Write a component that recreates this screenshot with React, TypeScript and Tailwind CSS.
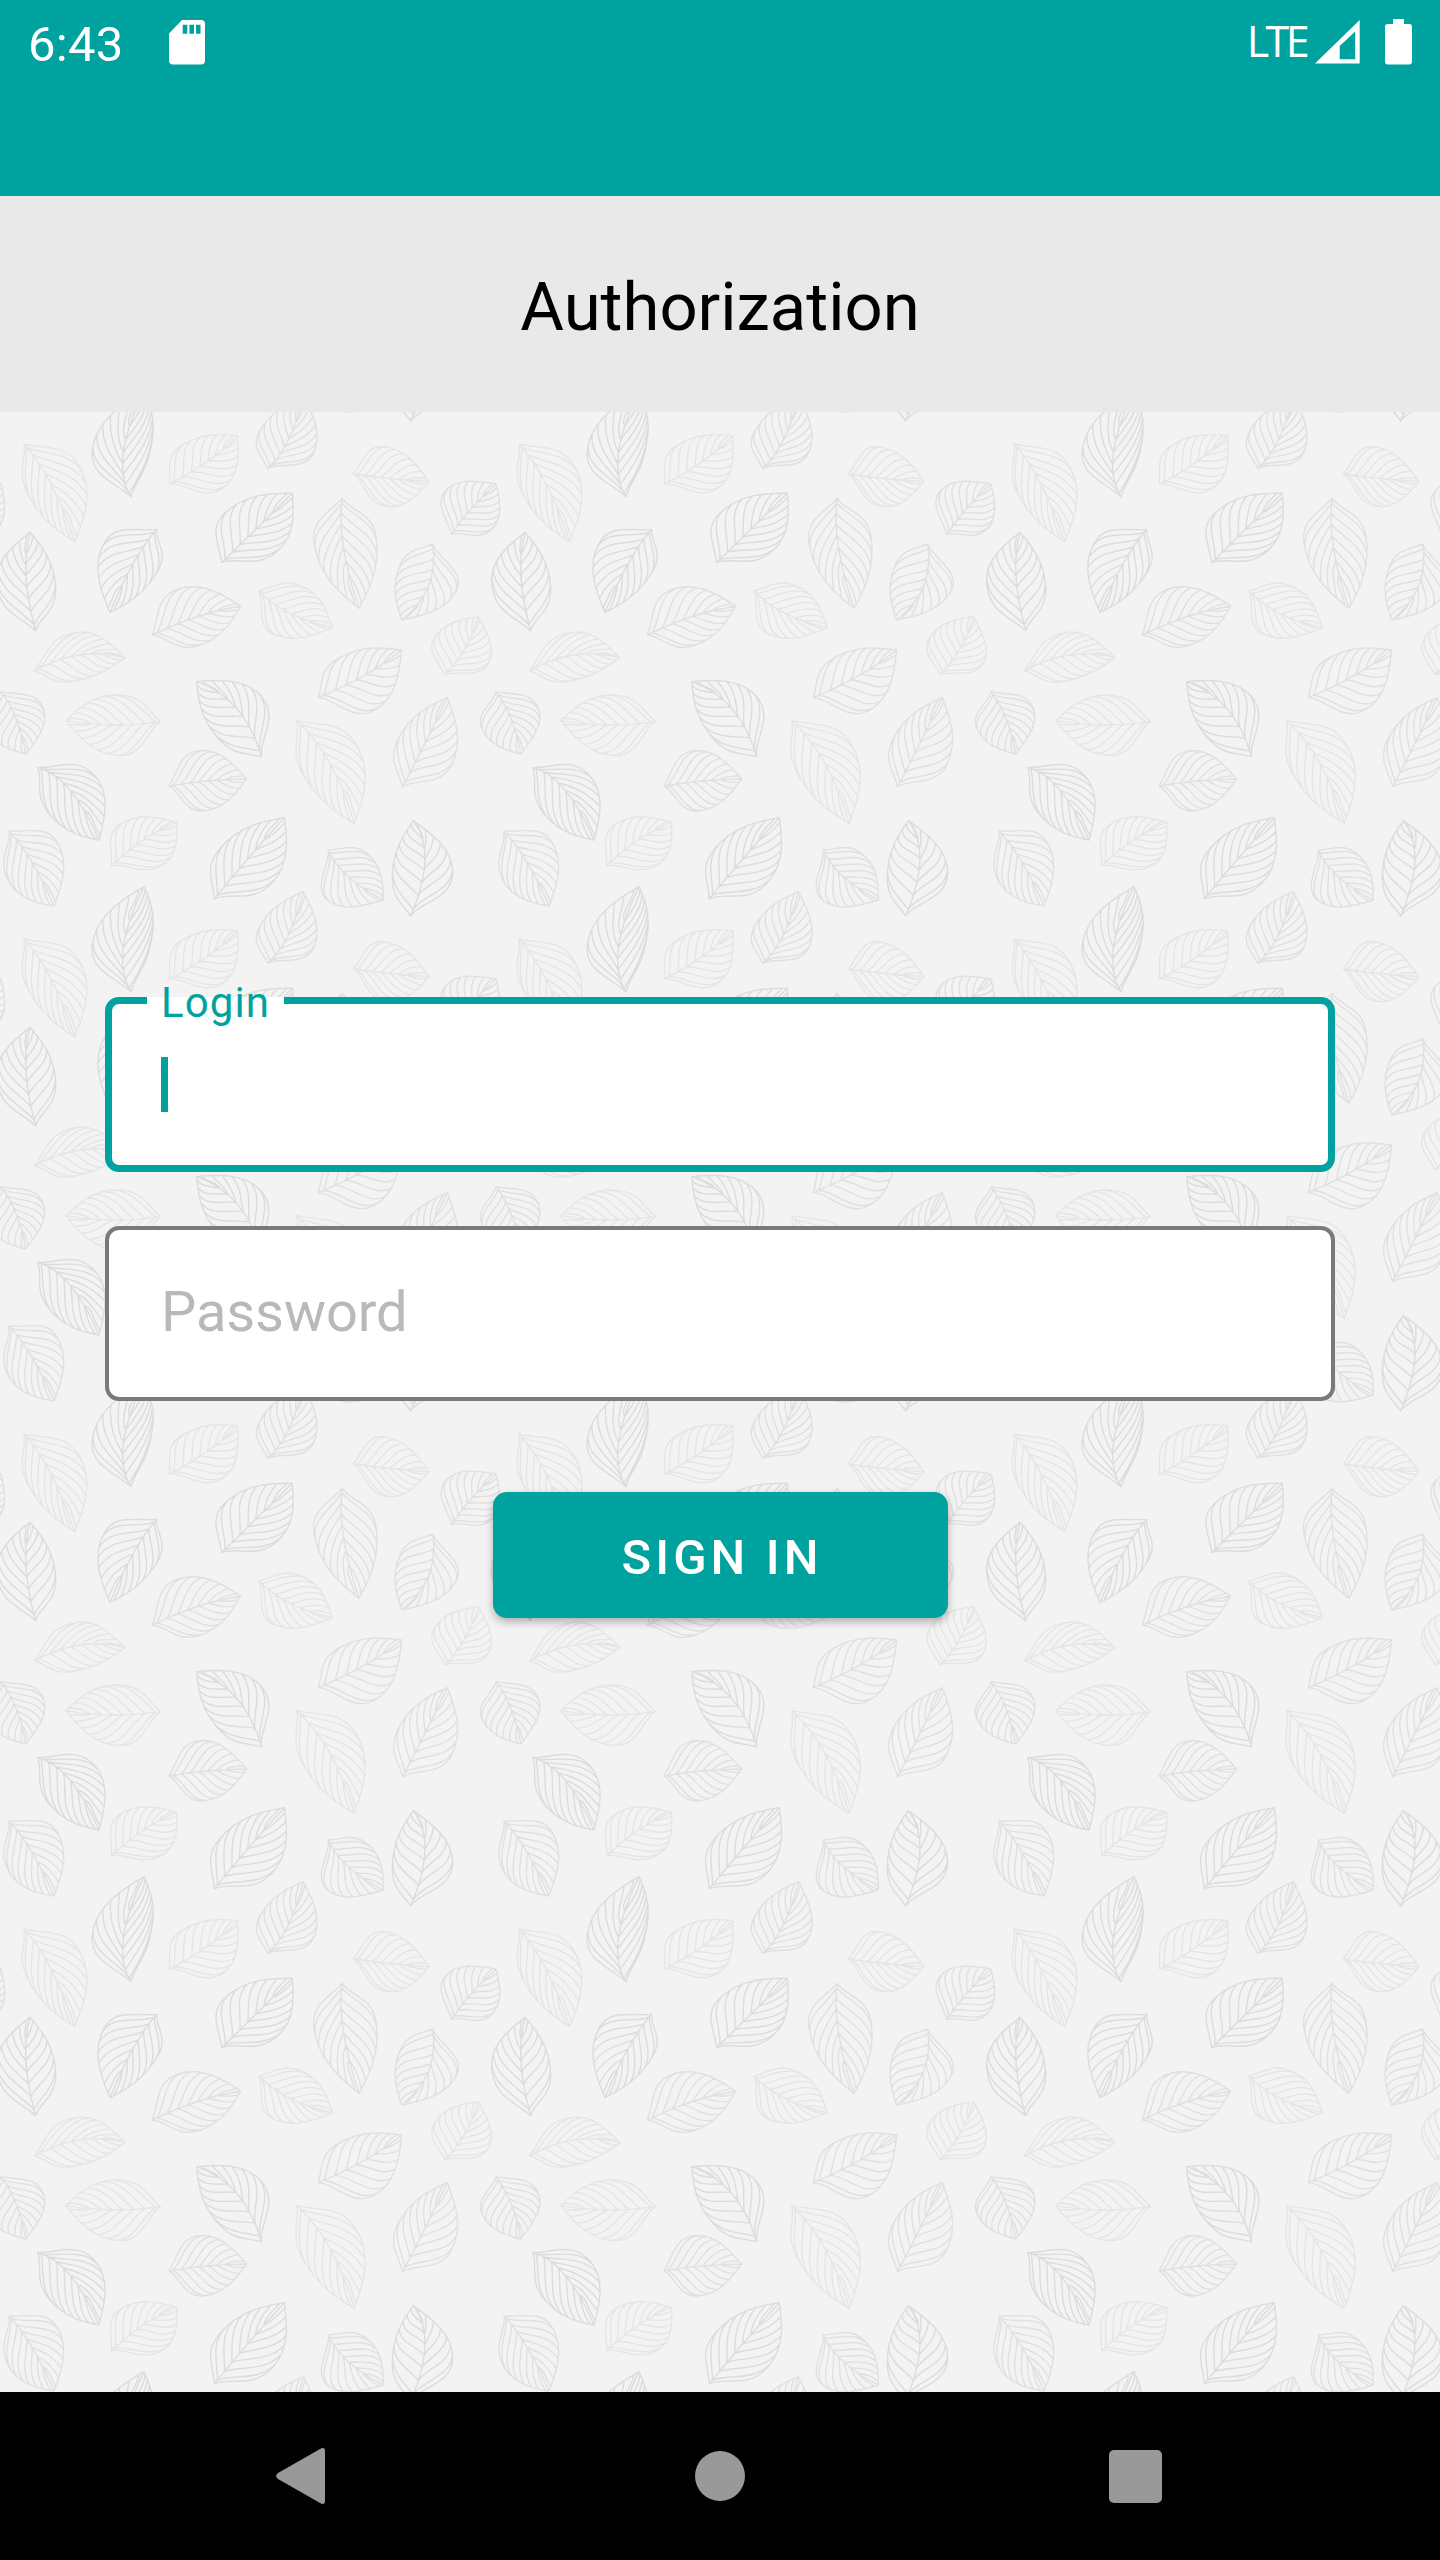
type Pt = [number, number];
type Shade = "dark" | "mid" | "light";
type Leaf = { stem: Pt; tip: Pt; sideA: Pt; sideB: Pt; rib: Pt; shade: Shade };

const TILE = 1485;

const leaf = (stem: Pt, tip: Pt, sideA: Pt, sideB: Pt, rib: Pt, shade: Shade): Leaf => ({
  stem, tip, sideA, sideB, rib, shade,
});

const leaves: Leaf[] = [
  leaf([72, 132], [224, 425], [242, 205], [85, 285], [152, 250], "light"),
  leaf([393, 290], [432, -25], [277, 150], [458, 110], [370, 160], "dark"),
  leaf([508, 252], [713, 107], [540, 140], [672, 262], [620, 185], "light"),
  leaf([803, 205], [910, -10], [776, 100], [940, 160], [865, 120], "mid"),
  leaf([1060, 222], [1287, 245], [1150, 140], [1165, 320], [1165, 235], "light"),
  leaf([1355, 403], [1488, 252], [1337, 272], [1478, 385], [1415, 325], "mid"),
  leaf([665, 488], [877, 280], [672, 342], [838, 448], [765, 390], "dark"),
  leaf([1027, 295], [1077, 625], [942, 430], [1128, 410], [1030, 440], "mid"),
  leaf([1298, 432], [1205, 660], [1198, 500], [1372, 565], [1285, 560], "mid"),
  leaf([470, 388], [330, 638], [312, 430], [475, 510], [400, 490], "dark"),
  leaf([107, 692], [90, 397], [-10, 545], [167, 560], [78, 530], "dark"),
  leaf([457, 705], [722, 618], [535, 567], [600, 736], [590, 650], "mid"),
  leaf([777, 573], [997, 683], [915, 563], [815, 700], [870, 640], "light"),
  leaf([103, 813], [375, 773], [230, 697], [215, 845], [240, 765], "light"),
  leaf([1335, 825], [1435, 650], [1303, 715], [1465, 790], [1395, 745], "light"),
  leaf([955, 893], [1205, 750], [1015, 775], [1125, 930], [1095, 825], "mid"),
  leaf([785, 1070], [590, 845], [650, 1010], [785, 890], [710, 925], "dark"),
  leaf([3, 875], [77, 1062], [130, 925], [-40, 985], [50, 960], "mid"),
  leaf([482, 965], [197, 962], [350, 885], [360, 1067], [340, 975], "light"),
  leaf([507, 1158], [740, 1137], [600, 1052], [610, 1233], [620, 1143], "mid"),
  leaf([113, 1103], [297, 1320], [287, 1130], [150, 1245], [210, 1170], "dark"),
  leaf([890, 962], [1063, 1270], [1073, 1040], [910, 1125], [990, 1090], "light"),
  leaf([1208, 1160], [1342, 893], [1195, 1015], [1355, 1095], [1275, 1030], "mid"),
  leaf([335, 1397], [530, 1267], [360, 1273], [495, 1390], [430, 1320], "light"),
  leaf([27, 1293], [162, 1518], [172, 1328], [28, 1447], [95, 1385], "mid"),
  leaf([643, 1497], [853, 1253], [660, 1345], [820, 1445], [740, 1380], "dark"),
  leaf([985, 1350], [1150, 1500], [1108, 1367], [980, 1498], [1045, 1430], "mid"),
  leaf([1232, 1548], [1240, 1262], [1177, 1425], [1358, 1420], [1275, 1380], "dark"),
];

const add = (p: Pt, q: Pt, k = 1): Pt => [p[0] + q[0] * k, p[1] + q[1] * k];
const sub = (p: Pt, q: Pt): Pt => [p[0] - q[0], p[1] - q[1]];
const dot = (p: Pt, q: Pt) => p[0] * q[0] + p[1] * q[1];
const fmt = (p: Pt) => `${p[0].toFixed(1)} ${p[1].toFixed(1)}`;

const cubicAt = (c: Pt[], t: number): Pt => {
  const s = 1 - t;
  const w = [s * s * s, 3 * s * s * t, 3 * s * t * t, t * t * t];
  return [
    c.reduce((sum, p, i) => sum + p[0] * w[i], 0),
    c.reduce((sum, p, i) => sum + p[1] * w[i], 0),
  ];
};

function leafPath({ stem, tip, sideA, sideB, rib }: Leaf): string {
  const axis = sub(tip, stem);
  const length = Math.hypot(axis[0], axis[1]);
  const u: Pt = [axis[0] / length, axis[1] / length];
  const ctrl: Pt = [2 * rib[0] - (stem[0] + tip[0]) / 2, 2 * rib[1] - (stem[1] + tip[1]) / 2];
  const ribAt = (t: number): Pt => {
    const s = 1 - t;
    return [
      s * s * stem[0] + 2 * s * t * ctrl[0] + t * t * tip[0],
      s * s * stem[1] + 2 * s * t * ctrl[1] + t * t * tip[1],
    ];
  };
  let d = `M${fmt(stem)}Q${fmt(ctrl)} ${fmt(tip)}`;
  for (const side of [sideA, sideB]) {
    const rel = sub(side, stem);
    const along = dot(rel, u);
    const out = add(rel, u, -along);
    const width = Math.hypot(out[0], out[1]);
    const n: Pt = [out[0] / width, out[1] / width];
    const rest = length - along;
    // The second side leaves the stem in a shallow inward curve.
    const flare = side === sideA ? 0.45 : 0.2;
    const lower: Pt[] = [
      stem,
      add(add(stem, u, along * 0.32), n, width * flare),
      add(side, u, -along * 0.6),
      side,
    ];
    const upper: Pt[] = [
      side,
      add(side, u, rest * 0.46),
      add(add(tip, u, -rest * 0.24), n, width * 0.46),
      tip,
    ];
    d += `M${fmt(stem)}C${lower.slice(1).map(fmt).join(" ")}C${upper.slice(1).map(fmt).join(" ")}`;
    for (let i = 0; i < 7; i++) {
      const t = 0.05 + i * 0.115;
      const v = 0.53 + i * 0.072;
      const end = cubicAt(upper, v * 2 - 1);
      const start = ribAt(t);
      const gap = Math.hypot(end[0] - start[0], end[1] - start[1]);
      const c1 = add(add(start, u, gap * 0.24), n, gap * (side === sideA ? 0.18 : 0.12));
      const c2 = add(end, u, -gap * 0.4);
      d += `M${fmt(start)}C${fmt(c1)} ${fmt(c2)} ${fmt(end)}`;
    }
  }
  return d;
}

const shadeClass: Record<Shade, string> = {
  dark: "stroke-[#dcdcdc]",
  mid: "stroke-[#e0e0e0]",
  light: "stroke-[#e5e5e5]",
};

const wraps: Pt[] = [
  [0, 0],
  [TILE, 0],
  [-TILE, 0],
  [0, -TILE],
  [0, TILE],
];

function LeafBackground() {
  return (
    <svg className="absolute inset-0 h-full w-full" aria-hidden="true">
      <defs>
        <g id="leaves" fill="none" strokeWidth="4.2" strokeLinecap="round" strokeLinejoin="round">
          {leaves.map((item, i) => (
            <path key={i} d={leafPath(item)} className={shadeClass[item.shade]} />
          ))}
        </g>
        <pattern
          id="foliage"
          width={TILE}
          height={TILE}
          patternUnits="userSpaceOnUse"
          patternTransform="translate(0 -12) scale(0.333333)"
        >
          {wraps.map(([x, y]) => (
            <use key={`${x},${y}`} href="#leaves" x={x} y={y} />
          ))}
        </pattern>
      </defs>
      <rect width="100%" height="100%" fill="url(#foliage)" />
    </svg>
  );
}

function StatusBar() {
  return (
    <div className="flex h-[196px] items-start justify-between bg-[#00a2a0] pr-7 pl-7 text-white">
      <div className="flex items-start">
        <span className="mt-4 w-[141px] text-[49px] leading-[58px] tracking-[0.3px]">6:43</span>
        <svg className="mt-5 h-[45px] w-9" viewBox="0 0 36 45" fill="currentColor">
          <path
            fillRule="evenodd"
            d="M13 0H32Q36 0 36 4V40.500Q36 44.500 32 44.500H4Q0 44.500 0 40.500V13.500ZM13.700 4.700V13.700H18.300V4.700ZM20.400 4.700V13.700H25V4.700ZM27 4.700V13.700H31.500V4.700Z"
          />
        </svg>
      </div>
      <div className="flex items-start">
        <span className="mt-[12px] mr-[9px] font-['Open_Sans'] text-[43px] leading-[58px] tracking-[-3.6px]">LTE</span>
        <svg className="mt-5 h-11 w-[45px]" viewBox="0 0 45 44" fill="currentColor">
          <path fillRule="evenodd" d="M44.700 0V43.500H0ZM40.200 11.500L24.700 26V39.300H40.200Z" />
        </svg>
        <svg className="mt-[19px] ml-[25px] h-[46px] w-[27px]" viewBox="0 0 27 46" fill="currentColor">
          <path d="M8 0H19V5H24.500Q27 5 27 7.500V42.500Q27 45.500 24 45.500H3Q0 45.500 0 42.500V7.500Q0 5 2.500 5H8Z" />
        </svg>
      </div>
    </div>
  );
}

function NavigationBar() {
  return (
    <nav className="flex h-[168px] items-center bg-black pl-[276px] text-[#999999]">
      <svg className="h-14 w-[49px]" viewBox="0 0 49 56" fill="currentColor">
        <path d="M44.500 0.700Q49 -1.500 49 3V53Q49 57.500 44.500 55.300L2 31Q-1.800 28 2 25Z" />
      </svg>
      <div className="ml-[370px] size-[50px] rounded-full bg-[#999999]" />
      <div className="ml-[364px] size-[53px] rounded-[5px] bg-[#999999]" />
    </nav>
  );
}

export default function App() {
  return (
    <div className="flex h-[2560px] w-[1440px] flex-col overflow-hidden bg-[#f3f3f3] font-[Roboto,sans-serif]">
      <StatusBar />
      <header className="flex h-[216px] items-center justify-center bg-[#e9e9e9]">
        <h1 className="mt-[5px] text-[67px] leading-[80px] text-black">Authorization</h1>
      </header>
      <main className="relative flex-1">
        <LeafBackground />
        <form className="relative flex flex-col items-center px-[105px] pt-[585px]">
          <div className="relative h-[175px] w-full rounded-[14px] border-[7px] border-[#00a2a0] bg-white pt-[53px] pl-[49px]">
            <div className="absolute -top-[7px] left-[35px] h-2 w-[137px] bg-white" />
            <label className="absolute -top-[26px] left-[49px] text-[42px] leading-[50px] tracking-[1.1px] text-[#00a2a0]">
              Login
            </label>
            <div className="h-[55px] w-[7px] bg-[#00a2a0]" />
          </div>
          <div className="mt-[54px] flex h-[175px] w-full items-center rounded-[14px] border-4 border-[#7a7a7a] bg-white pb-[3px] pl-[52px]">
            <span className="text-[56px] leading-[66px] tracking-[-0.1px] text-[#b9b9b9]">Password</span>
          </div>
          <button
            type="button"
            className="mt-[91px] h-[126px] w-[455px] rounded-[14px] bg-[#00a2a0] pt-[5px] pl-1 text-[49px] leading-[58px] font-medium tracking-[4.1px] text-white shadow-[0_4px_9px_rgba(0,0,0,0.28)]"
          >
            SIGN IN
          </button>
        </form>
      </main>
      <NavigationBar />
    </div>
  );
}
